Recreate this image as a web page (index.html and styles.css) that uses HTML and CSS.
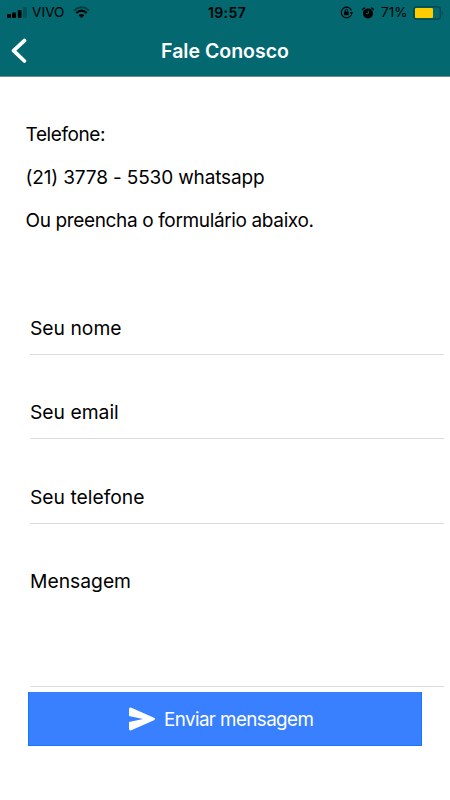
FILE: index.html
```html
<!DOCTYPE html>
<html lang="pt-BR">
<head>
<meta charset="utf-8">
<title>Fale Conosco</title>
<link rel="stylesheet" href="styles.css">
</head>
<body>
<header class="header">
  <div class="status">
    <div class="status-left">
      <svg class="signal" width="25" height="12" viewBox="0 0 25 12"><rect x="0" y="7" width="4" height="4" rx="1"/><rect x="5" y="5.5" width="4" height="5.5" rx="1"/><rect x="10.8" y="3" width="3.7" height="8" rx="1"/><rect x="16" y="0" width="4" height="11" rx="1" opacity=".22"/></svg>
      <span class="carrier">VIVO</span>
      <svg class="wifi" width="17" height="13" viewBox="0 0 17 13" fill="none" stroke="#000"><path d="M1 4.4Q8.5-2 16 4.4" stroke-width="2" opacity=".4"/><path d="M3.2 7Q8.5 2.4 13.8 7" stroke-width="2.2"/><path d="M5.6 9.2Q8.5 6.8 11.4 9.2L8.5 12Z" fill="#000" stroke="none"/></svg>
    </div>
    <span class="time">19:57</span>
    <div class="status-right">
      <svg class="lock" width="14" height="13" viewBox="0 0 14 13" fill="none" stroke="#000" stroke-width="1.1"><path d="M11.4 8.6A5.3 5.3 0 1 1 11.5 4.6"/><path d="M9.6 6.3h3.8l-1.9 2.4z" fill="#000" stroke="none"/><rect x="4.2" y="5.6" width="4.4" height="3.6" fill="#000" stroke="none"/><path d="M5.2 6V4.5a1.2 1.2 0 0 1 2.4 0V6" stroke-width=".9"/></svg>
      <svg class="alarm" width="12" height="12" viewBox="0 0 12 12"><circle cx="6" cy="6.4" r="5"/><path d="M.6 3.3Q.5 1 3 .8M11.4 3.3Q11.5 1 9 .8" fill="none" stroke="#000" stroke-width="1.3"/><path d="M6.3 3.6v3.1H3.9" fill="none" stroke="#036870" stroke-width="1"/></svg>
      <span class="percent">71%</span>
      <svg class="battery" width="32" height="14" viewBox="0 0 32 14"><rect x=".8" y=".8" width="26.6" height="12.4" rx="2.8" fill="none" stroke="#01434b" stroke-width="1.3"/><rect x="2" y="2" width="18" height="10" rx="1" fill="#fc0"/><path d="M29 4.5q1.8 2.5 0 5z" fill="#01434b"/></svg>
    </div>
  </div>
  <div class="nav">
    <svg class="back" width="16" height="26" viewBox="0 0 16 26"><path d="M13.4 2.6 2.6 12.6l10.8 10.4" fill="none" stroke="#fff" stroke-width="3.8" stroke-linecap="round" stroke-linejoin="round"/></svg>
    <h1 class="title">Fale Conosco</h1>
  </div>
</header>
<main>
  <section class="intro">
    <p class="phone-label">Telefone:</p>
    <p class="phone">(21) 3778 - 5530 whatsapp</p>
    <p class="hint">Ou preencha o formulário abaixo.</p>
  </section>
  <form class="form">
    <div class="field name">Seu nome</div>
    <div class="field email">Seu email</div>
    <div class="field tel">Seu telefone</div>
    <div class="field message">Mensagem</div>
    <button class="send" type="button">
      <svg width="26" height="24" viewBox="0 0 26 24"><path d="M0 2.2Q0 0 2.3.8L25 10.8Q27 12 25 13.2L2.3 23.2Q0 24 0 21.8V15L14 12 0 9Z" fill="#fff"/></svg>
      <span>Enviar mensagem</span>
    </button>
  </form>
</main>
</body>
</html>
```
FILE: styles.css
```css
* { box-sizing: border-box; }
body { margin: 0; background: #fff; color: #000; font-family: Inter, "Liberation Sans", sans-serif; font-weight: 370; height: 800px; overflow: hidden; }
svg { display: block; flex: none; }
.header { height: 77px; background: #036870; border-bottom: 1px solid #678e98; }
.status { height: 25px; display: grid; grid-template-columns: 1fr auto 1fr; color: #000; font-size: 13.5px; line-height: 25px; }
.status-left, .status-right { display: flex; align-items: center; }
.status-left { padding-left: 7px; }
.status-right { justify-content: flex-end; padding-right: 5px; }
.carrier { width: 33px; letter-spacing: .1px; white-space: nowrap; }
.wifi { margin-left: 8px; }
.time { font-size: 14px; font-weight: 600; width: 39px; letter-spacing: .4px; text-align: center; position: relative; left: 2px; }
.alarm { margin-left: 8px; }
.percent { margin-left: 7px; width: 27px; white-space: nowrap; }
.battery { margin-left: 5px; }
.nav { height: 51px; display: grid; grid-template-columns: 46px 1fr 46px; align-items: center; }
.back { margin-left: 11px; }
.title { margin: 0; color: #fff; font-size: 19.5px; font-weight: 600; line-height: 49px; padding-top: 2px; text-align: center; }
.intro { padding: 36px 25.5px 0; height: 223px; font-size: 19px; line-height: 43px; }
.intro p { margin: 0; white-space: nowrap; }
.phone-label { letter-spacing: -.4px; }
.phone { letter-spacing: -.15px; }
.hint { letter-spacing: -.36px; }
.form { margin: 0; padding-left: 28px; }
.field { margin-left: 2px; margin-right: 6px; height: 84px; padding: 13px 0 0; border-bottom: 1px solid #dcdcdc; font-size: 19.3px; line-height: 30px; }
.field.name { height: 55px; }
.field.email { padding-top: 42px; }
.field.tel { height: 85px; padding-top: 43px; }
.field.message { height: 163px; padding-top: 42px; }
.send { width: 394px; height: 54px; margin-top: 5px; padding: 0 0 0 100px; border: 1px solid #1476fb; border-top: 0; background: #3880ff; color: #fff; display: flex; align-items: center; gap: 9px; font: 18.8px Inter, "Liberation Sans", sans-serif; letter-spacing: -.58px; white-space: nowrap; }
.send span { padding-top: 2px; }
```
